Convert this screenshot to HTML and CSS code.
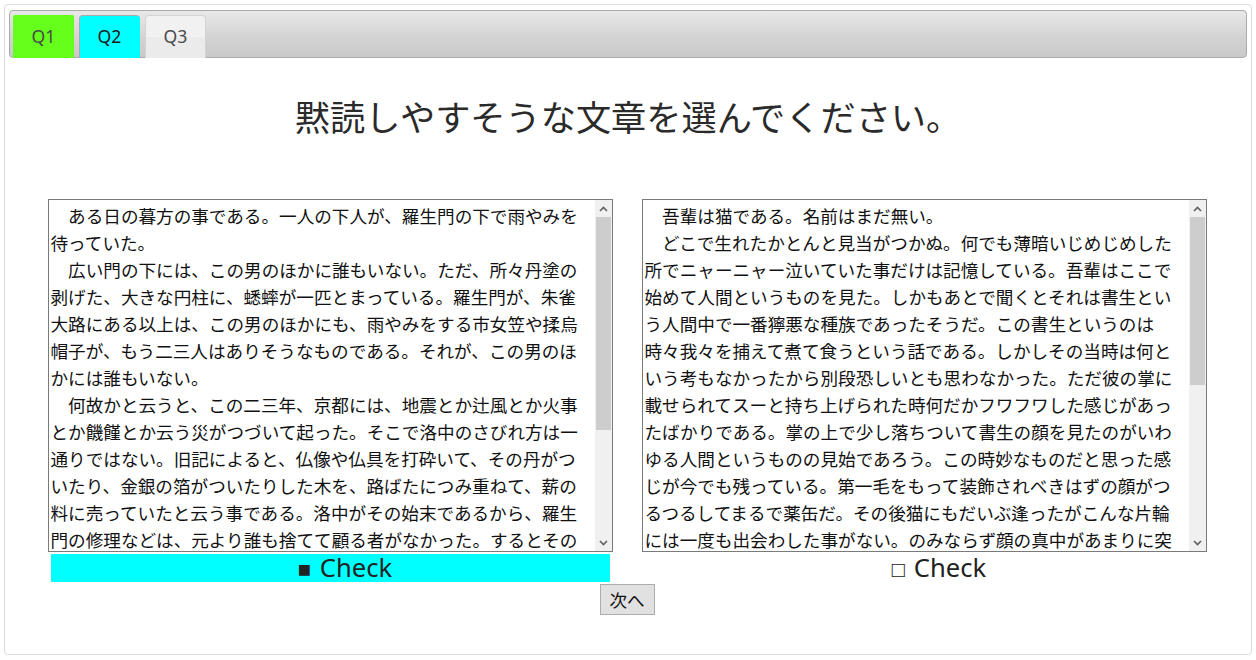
FILE: index.html
```html
<!DOCTYPE html>
<html lang="ja">
<head>
<meta charset="utf-8">
<title>黙読テスト</title>
<link rel="stylesheet" href="styles.css">
</head>
<body>
<div class="tabs">
  <ul class="tabbar">
    <li class="tab tab-q1">Q1</li>
    <li class="tab tab-q2">Q2</li>
    <li class="tab tab-q3">Q3</li>
  </ul>
  <div class="panel">
    <h1 class="title">黙読しやすそうな文章を選んでください。</h1>
    <div class="choices">
      <div class="choice">
        <div class="passage-box">
          <textarea class="passage" readonly>　ある日の暮方の事である。一人の下人が、羅生門の下で雨やみを待っていた。
　広い門の下には、この男のほかに誰もいない。ただ、所々丹塗の剥げた、大きな円柱に、蟋蟀が一匹とまっている。羅生門が、朱雀大路にある以上は、この男のほかにも、雨やみをする市女笠や揉烏帽子が、もう二三人はありそうなものである。それが、この男のほかには誰もいない。
　何故かと云うと、この二三年、京都には、地震とか辻風とか火事とか饑饉とか云う災がつづいて起った。そこで洛中のさびれ方は一通りではない。旧記によると、仏像や仏具を打砕いて、その丹がついたり、金銀の箔がついたりした木を、路ばたにつみ重ねて、薪の料に売っていたと云う事である。洛中がその始末であるから、羅生門の修理などは、元より誰も捨てて顧る者がなかった。するとその荒れ果てたのをよい事にして、狐狸が棲む。盗人が棲む。とうとうしまいには、引取り手のない死人を、この門へ持って来て、棄てて行くと云う習慣さえ出来た。そこで、日の目が見えなくなると、誰でも気味を悪るがって、この門の近所へは足ぶみをしない事になってしまったのである。
　その代り又鴉がどこからか、たくさん集って来た。</textarea>
          <div class="scrollbar">
            <div class="sb-btn"><svg width="9" height="6" viewBox="0 0 9 6"><path d="M1 5 L4.5 1.5 L8 5" fill="none" stroke="#606060" stroke-width="1.6"/></svg></div>
            <div class="sb-track"><div class="sb-thumb" style="height:213px"></div></div>
            <div class="sb-btn"><svg width="9" height="6" viewBox="0 0 9 6"><path d="M1 1 L4.5 4.5 L8 1" fill="none" stroke="#606060" stroke-width="1.6"/></svg></div>
          </div>
        </div>
        <div class="check check-on"><span class="mark">■</span> Check</div>
      </div>
      <div class="choice">
        <div class="passage-box">
          <textarea class="passage" readonly>　吾輩は猫である。名前はまだ無い。
　どこで生れたかとんと見当がつかぬ。何でも薄暗いじめじめした所でニャーニャー泣いていた事だけは記憶している。吾輩はここで始めて人間というものを見た。しかもあとで聞くとそれは書生という人間中で一番獰悪な種族であったそうだ。この書生というのは時々我々を捕えて煮て食うという話である。しかしその当時は何という考もなかったから別段恐しいとも思わなかった。ただ彼の掌に載せられてスーと持ち上げられた時何だかフワフワした感じがあったばかりである。掌の上で少し落ちついて書生の顔を見たのがいわゆる人間というものの見始であろう。この時妙なものだと思った感じが今でも残っている。第一毛をもって装飾されべきはずの顔がつるつるしてまるで薬缶だ。その後猫にもだいぶ逢ったがこんな片輪には一度も出会わした事がない。のみならず顔の真中があまりに突起している。そうしてその穴の中から時々ぷうぷうと煙を吹く。どうも咽せぽくて実に弱った。これが人間の飲む煙草というものである事はようやくこの頃知った。
　この書生の掌の裏でしばらくはよい心持に坐っておったが、しばらくすると非常な速力で運転し始めた。書生が動くのか自分だけが動くのか分らないが無暗に眼が廻る。胸が悪くなる。到底助からないと思っていると、どさりと音がして眼から火が出た。それまでは記憶しているがあとは何の事やらいくら考え出そうとしても分らない。</textarea>
          <div class="scrollbar">
            <div class="sb-btn"><svg width="9" height="6" viewBox="0 0 9 6"><path d="M1 5 L4.5 1.5 L8 5" fill="none" stroke="#606060" stroke-width="1.6"/></svg></div>
            <div class="sb-track"><div class="sb-thumb" style="height:168px"></div></div>
            <div class="sb-btn"><svg width="9" height="6" viewBox="0 0 9 6"><path d="M1 1 L4.5 4.5 L8 1" fill="none" stroke="#606060" stroke-width="1.6"/></svg></div>
          </div>
        </div>
        <div class="check"><span class="mark">□</span> Check</div>
      </div>
    </div>
    <div class="nav">
      <button class="next" type="button">次へ</button>
    </div>
  </div>
</div>
</body>
</html>
```

FILE: styles.css
```css
* {
  box-sizing: border-box;
}

html, body {
  margin: 0;
  background: #ffffff;
}

body {
  padding: 4px;
  font-family: "Noto Sans CJK JP", "Noto Sans", sans-serif;
  color: #222222;
}

.tabs {
  height: 651px;
  border: 1px solid #dddddd;
  border-radius: 4px;
  padding: 5px 4px 4px 4px;
  background: #ffffff;
}

.tabbar {
  list-style: none;
  margin: 0;
  height: 48px;
  padding: 4px 3px 0 3px;
  border: 1px solid #aaaaaa;
  border-radius: 4px;
  background: linear-gradient(to bottom, #e8e8e8 0%, #d4d4d4 55%, #c9c9c9 100%);
  display: flex;
  align-items: flex-start;
  gap: 5px;
}

.tab {
  width: 61px;
  height: 43px;
  margin-bottom: -1px;
  border: 1px solid #d3d3d3;
  border-bottom: none;
  border-radius: 4px 4px 0 0;
  font-family: "Noto Sans", "Noto Sans CJK JP", sans-serif;
  font-size: 17.6px;
  line-height: 41px;
  text-align: center;
  color: #4a4a4a;
}

.tab-q1 {
  background: #64ff1a;
  border-color: #64ff1a;
  border-radius: 2px 2px 0 0;
}

.tab-q2 {
  background: #00ffff;
  border-color: #aaaaaa #00ffff #00ffff #aaaaaa;
  color: #1a1a1a;
}

.tab-q3 {
  background: linear-gradient(to bottom, #f1f1f1 0%, #f1f1f1 50%, #ebebeb 50%, #ebebeb 100%);
}

.title {
  margin: 31px 0 0 0;
  font-size: 35.2px;
  line-height: 53px;
  font-weight: normal;
  text-align: center;
  color: #2a2a2a;
}

.choices {
  margin-top: 57px;
  padding-right: 2px;
  display: flex;
  justify-content: center;
  gap: 29px;
}

.choice {
  width: 565px;
}

.passage-box {
  display: flex;
  width: 565px;
  height: 353px;
  border: 1px solid #7a7a7a;
  background: #ffffff;
}

.passage {
  display: block;
  flex: 1 1 auto;
  min-width: 0;
  height: 100%;
  margin: 0;
  padding: 2px;
  border: none;
  border-radius: 0;
  resize: none;
  font-family: "Noto Sans CJK JP", sans-serif;
  font-size: 17.6px;
  line-height: 27px;
  color: #111111;
  background: #ffffff;
  line-break: strict;
  overflow: hidden;
  outline: none;
}

.scrollbar {
  flex: 0 0 17px;
  width: 17px;
  display: flex;
  flex-direction: column;
  background: #f0f0f0;
}

.sb-btn {
  flex: 0 0 17px;
  height: 17px;
  display: flex;
  align-items: center;
  justify-content: center;
}

.sb-track {
  flex: 1 1 auto;
  padding: 0 1px;
}

.sb-thumb {
  width: 100%;
  background: #cdcdcd;
}

.check {
  margin: 2px 3px 0 3px;
  height: 28px;
  padding-left: 30px;
  font-family: "Noto Sans", "Noto Sans CJK JP", sans-serif;
  font-size: 25.6px;
  line-height: 28px;
  text-align: center;
  color: #222222;
}

.check-on {
  background: #00ffff;
}

.mark {
  font-family: "Liberation Sans", sans-serif;
  font-size: 22px;
  margin-right: 2px;
}

.nav {
  margin-top: 2px;
  padding-right: 2px;
  display: flex;
  justify-content: center;
}

.next {
  width: 55px;
  height: 31px;
  padding: 0;
  margin: 0;
  border: 1px solid #adadad;
  border-radius: 0;
  background: #e1e1e1;
  font-family: "Noto Sans CJK JP", sans-serif;
  font-size: 17.6px;
  line-height: 29px;
  color: #111111;
}
```
